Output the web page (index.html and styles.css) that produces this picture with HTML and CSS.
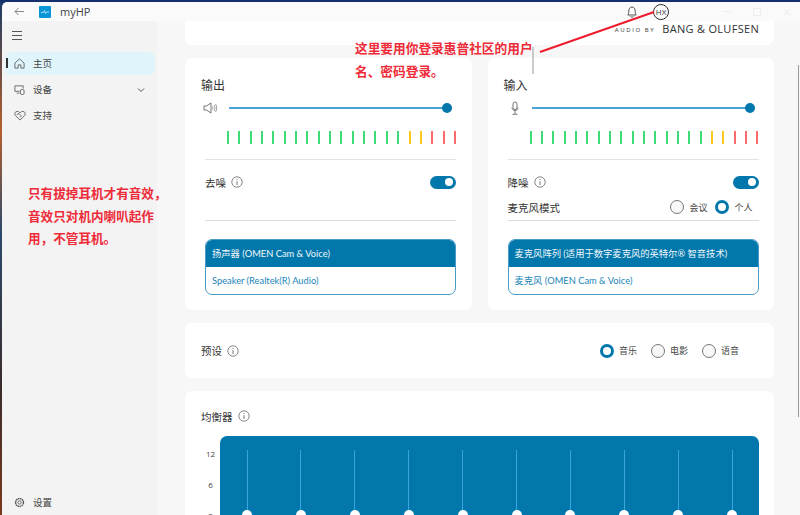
FILE: index.html
```html
<!DOCTYPE html>
<html>
<head>
	<meta charset="utf-8">
	<title>myHP</title>
	<link rel="stylesheet" href="styles.css">
</head>
<body>
	<svg class="defs" width="0" height="0">
		<symbol id="info" viewBox="0 0 12 12">
			<circle cx="6" cy="6" r="5.2" fill="none" stroke="#777" stroke-width="0.9"/>
			<path d="M6 5.200V9M6 3v1" fill="none" stroke="#777" stroke-width="1"/>
		</symbol>
	</svg>

	<div class="screen">
		<div class="wallpaper"></div>
		<div class="window">
			<div class="titlebar">
				<svg class="back" width="10" height="9" viewBox="0 0 10 9"><path d="M10 4.500H1M4.500 1L1 4.500 4.500 8" fill="none" stroke="#888" stroke-width="1"/></svg>
				<div class="app-logo">
					<svg width="12" height="12" viewBox="0 0 12 12"><rect width="12" height="12" rx="1" fill="#0a96d6"/><path d="M2 6.500h2.500l1-2 1 3 1-1.500H10" fill="none" stroke="#cfeefa" stroke-width="0.8"/></svg>
				</div>
				<span class="app-name">myHP</span>
				<div class="title-right">
					<svg class="bell" width="10" height="12" viewBox="0 0 10 12"><path d="M.7 9c.9-1 1.100-1.800 1.100-4C1.800 2.700 3 1 5 1s3.200 1.700 3.200 4c0 2.200.2 3 1.100 4zM3.500 10.500c.3.800 2.700.8 3 0" fill="none" stroke="#444" stroke-width="0.9"/></svg>
					<div class="avatar">HX</div>
					<div class="win-controls">
						<span class="win-min"></span>
						<span class="win-max"></span>
						<span class="win-close">×</span>
					</div>
				</div>
			</div>

			<div class="layout">
				<aside class="sidebar">
					<svg class="hamburger" width="10" height="9" viewBox="0 0 10 9"><path d="M0 .500h10M0 4.500h10M0 8.500h10" stroke="#555" stroke-width="1"/></svg>
					<nav class="nav">
						<a class="nav-item active">
							<svg width="11" height="11" viewBox="0 0 12 12"><path d="M1 5.500L6 1l5 4.500V11H7.500V7.500h-3V11H1z" fill="none" stroke="#555" stroke-width="0.9"/></svg>
							<span>主页</span>
						</a>
						<a class="nav-item">
							<svg width="11" height="11" viewBox="0 0 12 12"><path d="M6 8H1V2h9v3M3 10h3" fill="none" stroke="#555" stroke-width="0.9"/><rect x="7" y="6" width="4" height="5.500" rx="1.500" fill="#f3f3f3" stroke="#555" stroke-width="0.9"/></svg>
							<span>设备</span>
							<svg class="chevron" width="8" height="6" viewBox="0 0 8 6"><path d="M1 1.500l3 3 3-3" fill="none" stroke="#555" stroke-width="1"/></svg>
						</a>
						<a class="nav-item">
							<svg width="12" height="11" viewBox="0 0 13 12"><path d="M6.500 11L1.500 6C0 4.200 1 1.500 3.500 1.500c1.400 0 2.300.8 3 1.700.7-.9 1.600-1.700 3-1.700 2.500 0 3.500 2.700 2 4.500z" fill="none" stroke="#555" stroke-width="0.9"/><path d="M3 5l2.500-1L8 6.500 6.500 8" fill="none" stroke="#555" stroke-width="0.9"/></svg>
							<span>支持</span>
						</a>
					</nav>
					<a class="nav-item settings">
						<svg width="11" height="11" viewBox="0 0 12 12"><circle cx="6" cy="6" r="1.800" fill="none" stroke="#555" stroke-width="0.9"/><circle cx="6" cy="6" r="4.300" fill="none" stroke="#555" stroke-width="1.500" stroke-dasharray="1.800 0.450"/></svg>
						<span>设置</span>
					</a>
				</aside>

				<main class="main">
					<section class="card brand-card">
						<span class="audio-by">AUDIO BY</span>
						<span class="brand">BANG &amp; OLUFSEN</span>
					</section>

					<div class="audio-grid">
						<section class="card audio-card">
							<h3 class="card-title">输出</h3>
							<div class="slider-row">
								<svg class="slider-icon" width="15" height="12" viewBox="0 0 15 12"><path d="M1 4h2.500L8 1v10L3.500 8H1z" fill="none" stroke="#666" stroke-width="0.9"/><path d="M9.500 4.500c.6 1 .6 2 0 3M11 3c1.200 2 1.200 4 0 6M12.500 2c1.600 2.700 1.600 5.300 0 8" fill="none" stroke="#888" stroke-width="0.8"/></svg>
								<div class="track"><span class="knob"></span></div>
							</div>
							<div class="bars">
								<i></i><i></i><i></i><i></i><i></i><i></i><i></i><i></i><i></i><i></i><i></i><i></i><i></i><i></i><i></i><i></i>
								<i class="warn"></i><i class="warn"></i>
								<i class="peak"></i><i class="peak"></i><i class="peak"></i>
							</div>
							<div class="options">
								<div class="option-row">
									<span class="label">去噪</span>
									<svg class="info" width="12" height="12"><use href="#info"/></svg>
									<span class="toggle"></span>
								</div>
							</div>
							<div class="device-box">
								<div class="device-head">扬声器 (OMEN Cam &amp; Voice)</div>
								<div class="device-body">Speaker (Realtek(R) Audio)</div>
							</div>
						</section>

						<section class="card audio-card">
							<h3 class="card-title">输入</h3>
							<div class="slider-row">
								<svg class="slider-icon" width="15" height="14" viewBox="0 0 15 14"><rect x="7" y="1" width="4" height="7.500" rx="2" fill="none" stroke="#666" stroke-width="0.9"/><path d="M6 6.500c0 4 6 4 6 0M9 10v3M6.500 13.300h5" fill="none" stroke="#666" stroke-width="0.9"/></svg>
								<div class="track"><span class="knob"></span></div>
							</div>
							<div class="bars">
								<i></i><i></i><i></i><i></i><i></i><i></i><i></i><i></i><i></i><i></i><i></i><i></i><i></i><i></i><i></i><i></i>
								<i class="warn"></i><i class="warn"></i>
								<i class="peak"></i><i class="peak"></i><i class="peak"></i>
							</div>
							<div class="options">
								<div class="option-row">
									<span class="label">降噪</span>
									<svg class="info" width="12" height="12"><use href="#info"/></svg>
									<span class="toggle"></span>
								</div>
								<div class="option-row mode-row">
									<span class="label">麦克风模式</span>
									<div class="radios">
										<label class="radio"><i></i>会议</label>
										<label class="radio on"><i></i>个人</label>
									</div>
								</div>
							</div>
							<div class="device-box">
								<div class="device-head">麦克风阵列 (适用于数字麦克风的英特尔® 智音技术)</div>
								<div class="device-body">麦克风 (OMEN Cam &amp; Voice)</div>
							</div>
						</section>
					</div>

					<section class="card preset-card">
						<span class="label">预设</span>
						<svg class="info" width="12" height="12"><use href="#info"/></svg>
						<div class="radios preset-radios">
							<label class="radio on"><i></i>音乐</label>
							<label class="radio"><i></i>电影</label>
							<label class="radio"><i></i>语音</label>
						</div>
					</section>

					<section class="card eq-card">
						<div class="eq-title">
							<span class="label">均衡器</span>
							<svg class="info" width="12" height="12"><use href="#info"/></svg>
						</div>
						<div class="eq-body">
							<div class="eq-scale"><span>12</span><span>6</span><span>0</span></div>
							<div class="eq-panel">
								<div class="band"><b></b></div>
								<div class="band"><b></b></div>
								<div class="band"><b></b></div>
								<div class="band"><b></b></div>
								<div class="band"><b></b></div>
								<div class="band"><b></b></div>
								<div class="band"><b></b></div>
								<div class="band"><b></b></div>
								<div class="band"><b></b></div>
								<div class="band"><b></b></div>
							</div>
						</div>
					</section>
				</main>
			</div>
		</div>

		<!-- red notes drawn over the screenshot -->
		<p class="note note-top">这里要用你登录惠普社区的用户<br>名、密码登录。</p>
		<p class="note note-left">只有拔掉耳机才有音效，<br>音效只对机内喇叭起作<br>用，不管耳机。</p>
		<svg class="note-line" width="800" height="80" viewBox="0 0 800 80">
			<path d="M533 47V74" stroke="#aaa" stroke-width="1.200"/>
			<path d="M540 52L654 12" stroke="#ee1c2e" stroke-width="2"/>
		</svg>
		<span class="scroll-thumb"></span>
	</div>
</body>
</html>
```

FILE: styles.css
```css
*{
	margin:0;
	padding:0;
	box-sizing:border-box;
}

body{
	width:800px;
	height:515px;
	overflow:hidden;
	font-family:Lato, "Noto Sans CJK SC", sans-serif;
	color:#333;
	background:#14306f;
}

.defs{
	position:absolute;
}

.screen{
	position:relative;
	display:flex;
	height:515px;
	padding-top:2px;
	overflow:hidden;
}

.wallpaper{
	width:2px;
	flex:none;
	background:linear-gradient(#1d3a63, #b5602c 25%, #2b4a6b 45%, #3a2b2b 75%, #7a3a1e);
}

.window{
	flex:1;
	display:flex;
	flex-direction:column;
	min-width:0;
}

.titlebar{
	display:flex;
	align-items:center;
	height:19px;
	flex:none;
	background:#fafafa;
	border-top-left-radius:5px;
}

.back{
	margin-left:12px;
}

.app-logo{
	display:flex;
	margin-left:15px;
}

.app-name{
	margin-left:9px;
	font:11px "Open Sans", sans-serif;
	color:#444;
}

.title-right{
	display:flex;
	align-items:center;
	margin-left:auto;
	margin-right:9px;
}

.avatar{
	width:16px;
	height:16px;
	margin-left:16px;
	border:1px solid #333;
	border-radius:50%;
	font:8px/14px "Open Sans", sans-serif;
	text-align:center;
	background:#fff;
}

.win-controls{
	display:flex;
	align-items:center;
	margin-left:54px;
	gap:22px;
	color:#eee;
}

.win-min{
	width:8px;
	height:1px;
	background:#eee;
}

.win-max{
	width:8px;
	height:8px;
	border:1px solid #eee;
}

.win-close{
	width:8px;
	font-size:14px;
	line-height:14px;
	text-align:center;
}

.layout{
	flex:1;
	display:flex;
	min-height:0;
}

.sidebar{
	width:155px;
	flex:none;
	display:flex;
	flex-direction:column;
	background:#f3f3f3;
}

.hamburger{
	margin:10px 0 0 10px;
}

.nav{
	display:flex;
	flex-direction:column;
	gap:3px;
	margin-top:12px;
}

.nav-item{
	position:relative;
	display:flex;
	align-items:center;
	height:23px;
	margin:0 2px 0 3px;
	padding-left:9px;
	font-size:9.500px;
	color:#444;
	border-radius:6px;
}

.nav-item span{
	position:absolute;
	left:28px;
	top:4px;
}

.nav-item.active{
	background:#e0f4fb;
}

.nav-item.active::before{
	content:"";
	position:absolute;
	left:1px;
	top:6px;
	width:2px;
	height:10px;
	background:#333;
}

.chevron{
	position:absolute;
	right:10px;
}

.settings{
	margin-top:auto;
	margin-bottom:1px;
}

.main{
	flex:1;
	display:flex;
	flex-direction:column;
	gap:13px;
	min-width:0;
	padding:0 26px 0 28px;
	background:#f7f7f7;
	overflow:hidden;
}

.card{
	flex:none;
	background:#fff;
	border-radius:7px;
}

.brand-card{
	display:flex;
	align-items:center;
	justify-content:flex-end;
	gap:7px;
	height:24px;
	padding:0 15px 10px 0;
	border-radius:0 0 7px 7px;
}

.audio-by{
	font:6px "Open Sans", sans-serif;
	letter-spacing:1.600px;
	padding-top:4px;
}

.brand{
	font:11px "Open Sans", sans-serif;
	letter-spacing:0.300px;
}

.audio-grid{
	display:grid;
	grid-template-columns:1fr 1fr;
	gap:16px;
}

.audio-card{
	height:252px;
	padding:19px 15.500px 0 16px;
}

.card-title{
	height:18px;
	font-size:12px;
	font-weight:400;
	line-height:18px;
}

.slider-row{
	display:flex;
	align-items:center;
	height:16px;
	margin-top:5px;
}

.slider-icon{
	width:15px;
	margin-left:2px;
	flex:none;
}

.track{
	position:relative;
	height:1.500px;
	margin-left:11px;
	width:223px;
	background:#4aa3d2;
}

.knob{
	position:absolute;
	right:0;
	top:-4.500px;
	width:10px;
	height:10px;
	border-radius:50%;
	background:#0277ab;
}

.bars{
	display:flex;
	justify-content:space-between;
	height:13px;
	margin:15px 0 0 26px;
}

.bars i{
	width:2px;
	background:#3ddc78;
}

.bars .warn{
	background:#fdc71c;
}

.bars .peak{
	background:#fb6a6c;
}

.options{
	height:62px;
	margin:15px 0 0 4px;
	padding-top:13px;
	border-top:1.500px solid #e2e2e2;
	border-bottom:1px solid #dcdcdc;
}

.option-row{
	display:flex;
	align-items:center;
	height:18px;
}

.mode-row{
	margin-top:7px;
}

.label{
	font-size:10.500px;
	color:#333;
}

.info{
	margin-left:5px;
	flex:none;
}

.toggle{
	position:relative;
	width:26px;
	height:13px;
	margin-left:auto;
	border-radius:7px;
	background:#0277ab;
}

.toggle::after{
	content:"";
	position:absolute;
	right:3px;
	top:2.500px;
	width:8px;
	height:8px;
	border-radius:50%;
	background:#fff;
}

.radios{
	display:flex;
	align-items:center;
	margin-left:auto;
	margin-right:6px;
	gap:8px;
}

.radio{
	display:flex;
	align-items:center;
	gap:5px;
	font-size:9px;
	color:#444;
}

.radio i{
	width:14px;
	height:14px;
	border:1px solid #777;
	border-radius:50%;
	background:#f8f8f8;
}

.radio.on i{
	border:3.500px solid #0277ab;
	background:#fff;
}

.device-box{
	height:56px;
	margin:18px 0 0 4px;
	border:1px solid #4a9cc7;
	border-radius:7px;
	overflow:hidden;
	font-size:9.300px;
}

.device-head{
	height:27px;
	padding-left:6px;
	line-height:28px;
	color:#f0f8fb;
	background:#0277ab;
}

.device-body{
	padding-left:6px;
	line-height:27px;
	color:#1b86b8;
}

.preset-card{
	display:flex;
	align-items:center;
	height:55px;
	padding:0 35px 0 16px;
}

.preset-radios{
	gap:14px;
	margin-right:0;
}

.eq-card{
	height:200px;
	padding:16px 15px 0 16px;
}

.eq-title{
	display:flex;
	align-items:center;
	height:18px;
}

.eq-body{
	display:flex;
	margin-top:11px;
}

.eq-scale{
	display:flex;
	flex:none;
	flex-direction:column;
	align-items:center;
	gap:18px;
	width:19px;
	padding-top:11px;
	font:8px/13px "Open Sans", sans-serif;
	color:#444;
}

.eq-panel{
	flex:1;
	display:flex;
	height:120px;
	padding-top:14px;
	background:#0277ab;
	border-radius:7px;
}

.band{
	position:relative;
	flex:1;
	height:70px;
}

.band::before{
	content:"";
	position:absolute;
	left:26.500px;
	top:0;
	bottom:0;
	width:1px;
	background:#3aa5da;
}

.band b{
	position:absolute;
	left:22px;
	top:60px;
	width:10px;
	height:10px;
	border-radius:50%;
	background:#fff;
}

.note{
	position:absolute;
	font-weight:700;
	color:#ee2b39;
}

.note-top{
	left:355px;
	top:37px;
	font-size:12.700px;
	line-height:23px;
}

.note-left{
	left:28px;
	top:183px;
	font-size:12.600px;
	line-height:22.500px;
}

.note-line{
	position:absolute;
	left:0;
	top:0;
}

.scroll-thumb{
	position:absolute;
	right:1px;
	top:65px;
	width:1.500px;
	height:352px;
	background:#999;
}
```
